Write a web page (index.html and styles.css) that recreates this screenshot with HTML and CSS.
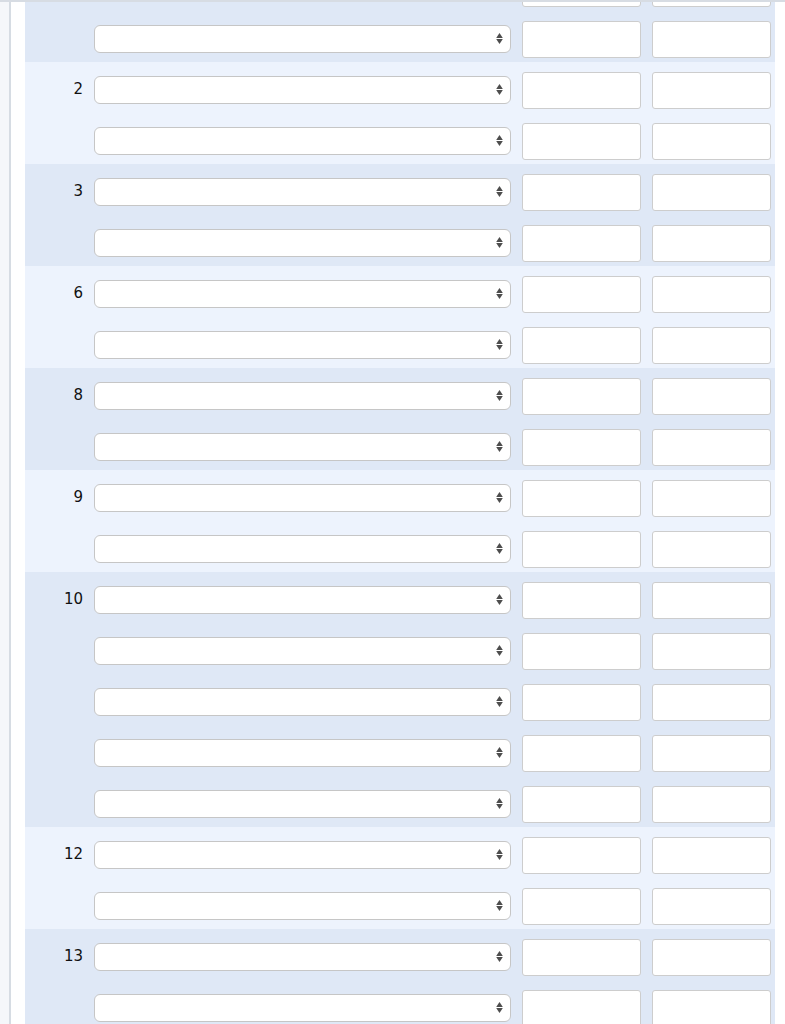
FILE: index.html
```html
<!DOCTYPE html>
<html>
<head>
<meta charset="utf-8">
<link rel="stylesheet" href="styles.css">
</head>
<body>
<div class="topline"></div>
<div class="page">
  <div class="sidebar"></div>
  <div class="gutter"></div>
  <div class="table" id="table"></div>
</div>
<script>
  var groups = [["", 2], ["2", 2], ["3", 2], ["6", 2], ["8", 2], ["9", 2], ["10", 5], ["12", 2], ["13", 2]];
  var arrow = '<svg class="arrows" width="7" height="11" viewBox="0 0 7 11"><path d="M3.5 0 L6.8 5 L0.2 5 Z" fill="#4d4d4d"/><path d="M3.5 11 L6.8 6 L0.2 6 Z" fill="#4d4d4d"/></svg>';
  var html = "";
  groups.forEach(function (g, gi) {
    html += '<div class="group ' + (gi % 2 === 0 ? "dark" : "light") + '">';
    for (var r = 0; r < g[1]; r++) {
      html += '<div class="row"><div class="label">' + (r === 0 ? g[0] : "") + '</div>' +
        '<div class="selectwrap"><select class="sel"><option></option></select>' + arrow + '</div>' +
        '<input class="inp" type="text"><input class="inp" type="text"></div>';
    }
    html += '</div>';
  });
  document.getElementById("table").innerHTML = html;
</script>
</body>
</html>
```

FILE: styles.css
```css
html, body {
  margin: 0;
  padding: 0;
  background: #ffffff;
  height: 1024px;
  overflow: hidden;
  font-family: "DejaVu Sans", "Liberation Sans", sans-serif;
}

.topline {
  height: 2px;
  background: #d7dce3;
  position: relative;
  z-index: 2;
}

.page {
  display: flex;
  height: 1022px;
  overflow: hidden;
}

.sidebar {
  width: 9px;
  flex: none;
  background: #f5f7fa;
  border-right: 2px solid #d6dce3;
}

.gutter {
  width: 14px;
  flex: none;
  background: #ffffff;
}

.table {
  width: 750px;
  flex: none;
  margin-top: -42px;
}

.group.dark {
  background: #dfe8f6;
}

.group.light {
  background: #edf3fd;
}

.row {
  display: grid;
  grid-template-columns: 58px 417px 119px 119px;
  column-gap: 11px;
  align-items: center;
  padding: 10px 0 4px 0;
  height: 37px;
}

.label {
  text-align: right;
  font-size: 15px;
  color: #111111;
  line-height: 18px;
  margin-top: -3px;
}

.selectwrap {
  position: relative;
  height: 28px;
  margin-top: -1px;
}

.sel {
  -webkit-appearance: none;
  appearance: none;
  width: 417px;
  height: 28px;
  box-sizing: border-box;
  border: 1px solid #c6c6c6;
  border-radius: 6px;
  background: #ffffff;
  margin: 0;
  padding: 0 24px 0 8px;
  font-size: 13px;
  font-family: "DejaVu Sans", sans-serif;
  display: block;
}

.arrows {
  position: absolute;
  right: 8px;
  top: 8px;
}

.inp {
  width: 119px;
  height: 37px;
  box-sizing: border-box;
  border: 1px solid #cdcdcd;
  border-radius: 3px;
  background: #ffffff;
  margin: 0;
  padding: 0 6px;
  display: block;
}
```
